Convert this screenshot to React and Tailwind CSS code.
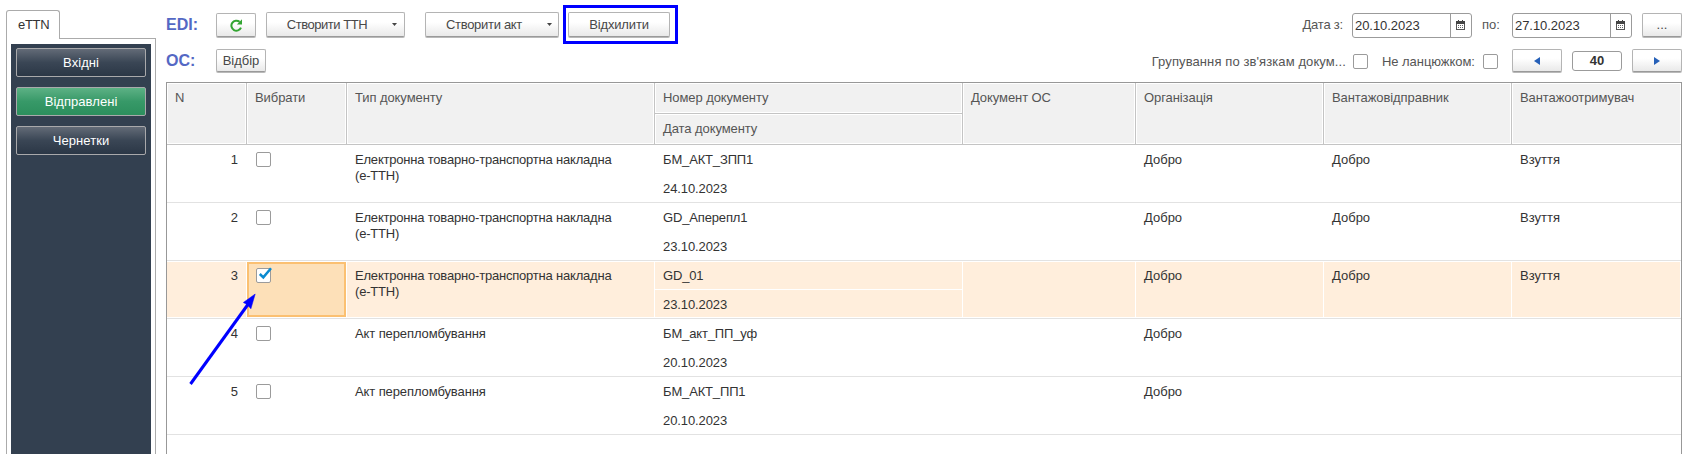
import React from "react";

const face = "bg-gradient-to-b from-white from-40% to-[#e9e9e9] border border-[#b4b4b4] border-b-[#9a9a9a] rounded-[2px] shadow-[0_1px_0_#b9b9b9]";

function Button({ className = "", children }) {
  return (
    <button className={`flex shrink-0 items-center justify-center whitespace-nowrap text-[#484848] ${face} ${className}`}>
      {children}
    </button>
  );
}

function Caret() {
  return (
    <svg width="5" height="3" viewBox="0 0 5 3" className="shrink-0">
      <path d="M0 0h5L2.5 3z" fill="#444" />
    </svg>
  );
}

function Checkbox({ checked, className = "" }) {
  return (
    <span className={`relative block size-[15px] shrink-0 rounded-[2px] border border-[#9b9b9b] bg-white ${className}`}>
      {checked && (
        <svg width="15" height="14" viewBox="0 0 15 14" className="absolute -top-[2px] left-px">
          <path d="M1.8 7L5.3 10.4L13 1.2" fill="none" stroke="#0a8ad0" strokeWidth="2.5" />
        </svg>
      )}
    </span>
  );
}

function DateInput({ value, className = "" }) {
  return (
    <div className={`flex h-[25px] w-[120px] shrink-0 rounded-[3px] border border-[#9b9b9b] bg-white ${className}`}>
      <span className="w-[97px] pl-[2px] leading-[23px] tracking-[-0.05px] text-[#333]">{value}</span>
      <span className="flex flex-1 items-center justify-center border-l border-[#9b9b9b] pb-px pr-[2px]">
        <svg width="9" height="10" viewBox="0 0 9 10" shapeRendering="crispEdges">
          <path d="M0 1h9v9H0zM1 4v5h7V4z" fill="#555" fillRule="evenodd" />
          <path d="M0 1h9v3H0zM2 0h1v1H2zM6 0h1v1H6z" fill="#444" />
          <path d="M2 5h1v1H2zM4 5h1v1H4zM6 5h1v1H6zM2 7h1v1H2zM4 7h1v1H4zM6 7h1v1H6z" fill="#666" />
        </svg>
      </span>
    </div>
  );
}

const sideItems = [
  { label: "Вхідні" },
  { label: "Відправлені", active: true },
  { label: "Чернетки" },
];

function Sidebar() {
  return (
    <aside className="flex w-[150px] shrink-0 flex-col pt-[10px]">
      <div className="flex h-[29px]">
        <div className="w-[54px] rounded-t-[3px] border border-b-0 border-[#ababab] pl-[11px] pt-[6px] leading-4 tracking-[-0.3px] text-[#333]">
          eTTN
        </div>
        <div className="flex-1 border-b border-[#ababab]" />
      </div>
      <div className="flex flex-1 border-x border-[#ababab] px-1 pt-[5px]">
        <nav className="flex flex-1 flex-col gap-[10px] bg-[#334050] px-[5px] pt-1">
          {sideItems.map((it) => (
            <button
              key={it.label}
              className={
                "h-[29px] shrink-0 rounded-[2px] border border-[#a9a9ab] bg-gradient-to-b pt-px tracking-[0.05px] text-white " +
                (it.active
                  ? "from-[#5cb185] via-[#379968] via-50% to-[#2c8f5d]"
                  : "from-[#636b77] via-[#3a4655] via-50% to-[#2b3746]")
              }
            >
              {it.label}
            </button>
          ))}
        </nav>
      </div>
    </aside>
  );
}

function Toolbar() {
  return (
    <div className="flex h-[82px] shrink-0 justify-between">
      <div className="flex flex-col">
        <div className="flex h-[49px] items-start pt-[5px]">
          <span className="mt-[10px] w-[50px] text-[16px] font-bold leading-[20px] text-[#5468c4]">EDI:</span>
          <Button className="mt-[8px] h-[24px] w-[40px]">
            <svg width="13" height="13" viewBox="0 0 13 13">
              <path d="M9.6 2.8A5 5 0 1 0 11 8.6" fill="none" stroke="#33a532" strokeWidth="2" />
              <path d="M12 0.3v5.2H6.9z" fill="#33a532" />
            </svg>
          </Button>
          <Button className="ml-[10px] mt-[7px] h-[25px] w-[139px] gap-[25px] pl-[13px] tracking-[-0.45px]">
            Створити ТТН
            <Caret />
          </Button>
          <Button className="ml-[20px] mt-[7px] h-[25px] w-[134px] gap-[25px] pl-[14px] tracking-[-0.3px]">
            Створити акт
            <Caret />
          </Button>
          <div className="ml-[4px] flex h-[39px] w-[115px] border-[3px] border-[#0000ff] pl-[2px] pt-[4px]">
            <Button className="h-[25px] w-[102px] tracking-[-0.15px]">Відхилити</Button>
          </div>
        </div>
        <div className="flex items-start">
          <span className="mt-px w-[50px] text-[16px] font-bold leading-[22px] text-[#5468c4]">ОС:</span>
          <Button className="h-[23px] w-[50px]">Відбір</Button>
        </div>
      </div>
      <div className="flex flex-col items-end text-[#555]">
        <div className="flex h-[49px] items-start pt-[13px] leading-[24px]">
          <span className="mr-[9px] tracking-[-0.2px]">Дата з:</span>
          <DateInput value="20.10.2023" />
          <span className="ml-[10px] w-[30px]">по:</span>
          <DateInput value="27.10.2023" />
          <Button className="ml-[10px] h-[24px] w-[40px] text-[#888]">...</Button>
        </div>
        <div className="flex items-start leading-[26px]">
          <span className="mr-[7px] tracking-[0.1px]">Групування по зв'язкам докум...</span>
          <Checkbox className="mt-[5px]" />
          <span className="ml-[14px] w-[101px] tracking-[-0.05px]">Не ланцюжком:</span>
          <Checkbox className="mt-[5px]" />
          <Button className="ml-[14px] h-[23px] w-[50px]">
            <svg width="6" height="8" viewBox="0 0 6 8"><path d="M6 0v8L0 4z" fill="#2660b8" /></svg>
          </Button>
          <div className="ml-[10px] mt-[2px] h-[20px] w-[50px] rounded-[3px] border border-[#9b9b9b] text-center font-bold leading-[18px] text-[#333]">
            40
          </div>
          <Button className="ml-[10px] h-[23px] w-[50px]">
            <svg width="6" height="8" viewBox="0 0 6 8"><path d="M0 0v8l6-4z" fill="#2660b8" /></svg>
          </Button>
        </div>
      </div>
    </div>
  );
}

const cols = "grid grid-cols-[80px_100px_308px_308px_173px_188px_188px_169px]";
const head = "border-r border-[#c4c4c4] shadow-[inset_0_0_0_1px_#fff] bg-[#f1f1f1] pl-2 pt-[7px] ";

const EL = "Електронна товарно-транспортна накладна (е-ТТН)";
const AKT = "Акт перепломбування";
const rows = [
  { n: 1, type: EL, num: "БМ_АКТ_ЗПП1", date: "24.10.2023", org: "Добро", from: "Добро", to: "Взуття" },
  { n: 2, type: EL, num: "GD_Аперепл1", date: "23.10.2023", org: "Добро", from: "Добро", to: "Взуття" },
  { n: 3, type: EL, num: "GD_01", date: "23.10.2023", org: "Добро", from: "Добро", to: "Взуття", checked: true },
  { n: 4, type: AKT, num: "БМ_акт_ПП_уф", date: "20.10.2023", org: "Добро" },
  { n: 5, type: AKT, num: "БМ_АКТ_ПП1", date: "20.10.2023", org: "Добро" },
];

function Row({ r }) {
  const cell = "pt-[6px] pl-2 border-r " + (r.checked ? "bg-[#ffeedc] border-white" : "border-transparent");
  return (
    <div className={`${cols} h-[58px] shrink-0 border-b border-[#e2e2e2] py-px leading-4 text-[#333]`}>
      <div className={`${cell} pr-[8px] text-right`}>{r.n}</div>
      <div className={r.checked ? "relative mr-px border-2 border-[#fbc071] bg-[#fde0b8] pl-[7px] pt-[4px]" : "pl-[9px] pt-[6px]"}>
        <Checkbox checked={r.checked} />
      </div>
      <div className={`${cell} pr-8 ${r.type === AKT ? "tracking-[-0.1px]" : "tracking-[-0.2px]"}`}>{r.type}</div>
      <div className={`flex flex-col border-r ${r.checked ? "border-white bg-[#ffeedc]" : "border-transparent"}`}>
        <div className={`h-[28px] border-b pl-2 pt-[6px] tracking-[-0.15px] ${r.checked ? "border-white" : "border-transparent"}`}>{r.num}</div>
        <div className="pl-2 pt-[7px] tracking-[-0.1px]">{r.date}</div>
      </div>
      <div className={cell} />
      <div className={cell}>{r.org}</div>
      <div className={cell}>{r.from}</div>
      <div className={cell}>{r.to}</div>
    </div>
  );
}

function Table() {
  return (
    <div className="flex flex-1 flex-col border border-b-0 border-[#989898]">
      <div className={`${cols} h-[62px] shrink-0 border-b border-[#c4c4c4] leading-4 tracking-[-0.08px] text-[#555]`}>
        <div className={head}>N</div>
        <div className={head}>Вибрати</div>
        <div className={head}>Тип документу</div>
        <div className="flex flex-col border-r border-[#c4c4c4]">
          <div className="h-[31px] border-b border-[#c4c4c4] bg-[#f1f1f1] pl-2 pt-[7px] shadow-[inset_0_0_0_1px_#fff]">Номер документу</div>
          <div className="flex-1 bg-[#f1f1f1] pl-2 pt-[7px] shadow-[inset_0_0_0_1px_#fff]">Дата документу</div>
        </div>
        <div className={head}>Документ ОС</div>
        <div className={head}>Організація</div>
        <div className={head}>Вантажовідправник</div>
        <div className="bg-[#f1f1f1] pl-2 pt-[7px] shadow-[inset_0_0_0_1px_#fff]">Вантажоотримувач</div>
      </div>
      {rows.map((r) => (
        <Row key={r.n} r={r} />
      ))}
    </div>
  );
}

export default function App() {
  return (
    <div className="relative flex h-[454px] w-[1693px] overflow-hidden bg-white pl-[6px] font-['Liberation_Sans',Arial,sans-serif] text-[13px]">
      <Sidebar />
      <main className="ml-[10px] flex w-[1516px] flex-col">
        <Toolbar />
        <Table />
      </main>
      <svg className="pointer-events-none absolute left-[185px] top-[288px]" width="76" height="100" viewBox="185 288 76 100">
        <path d="M190.5 384L249 303" stroke="#0000ff" strokeWidth="3" />
        <path d="M255.2 294L243.3 302.5L247 304.5L250.9 308.8z" fill="#0000ff" stroke="#0000ff" strokeWidth="0.5" />
      </svg>
    </div>
  );
}
